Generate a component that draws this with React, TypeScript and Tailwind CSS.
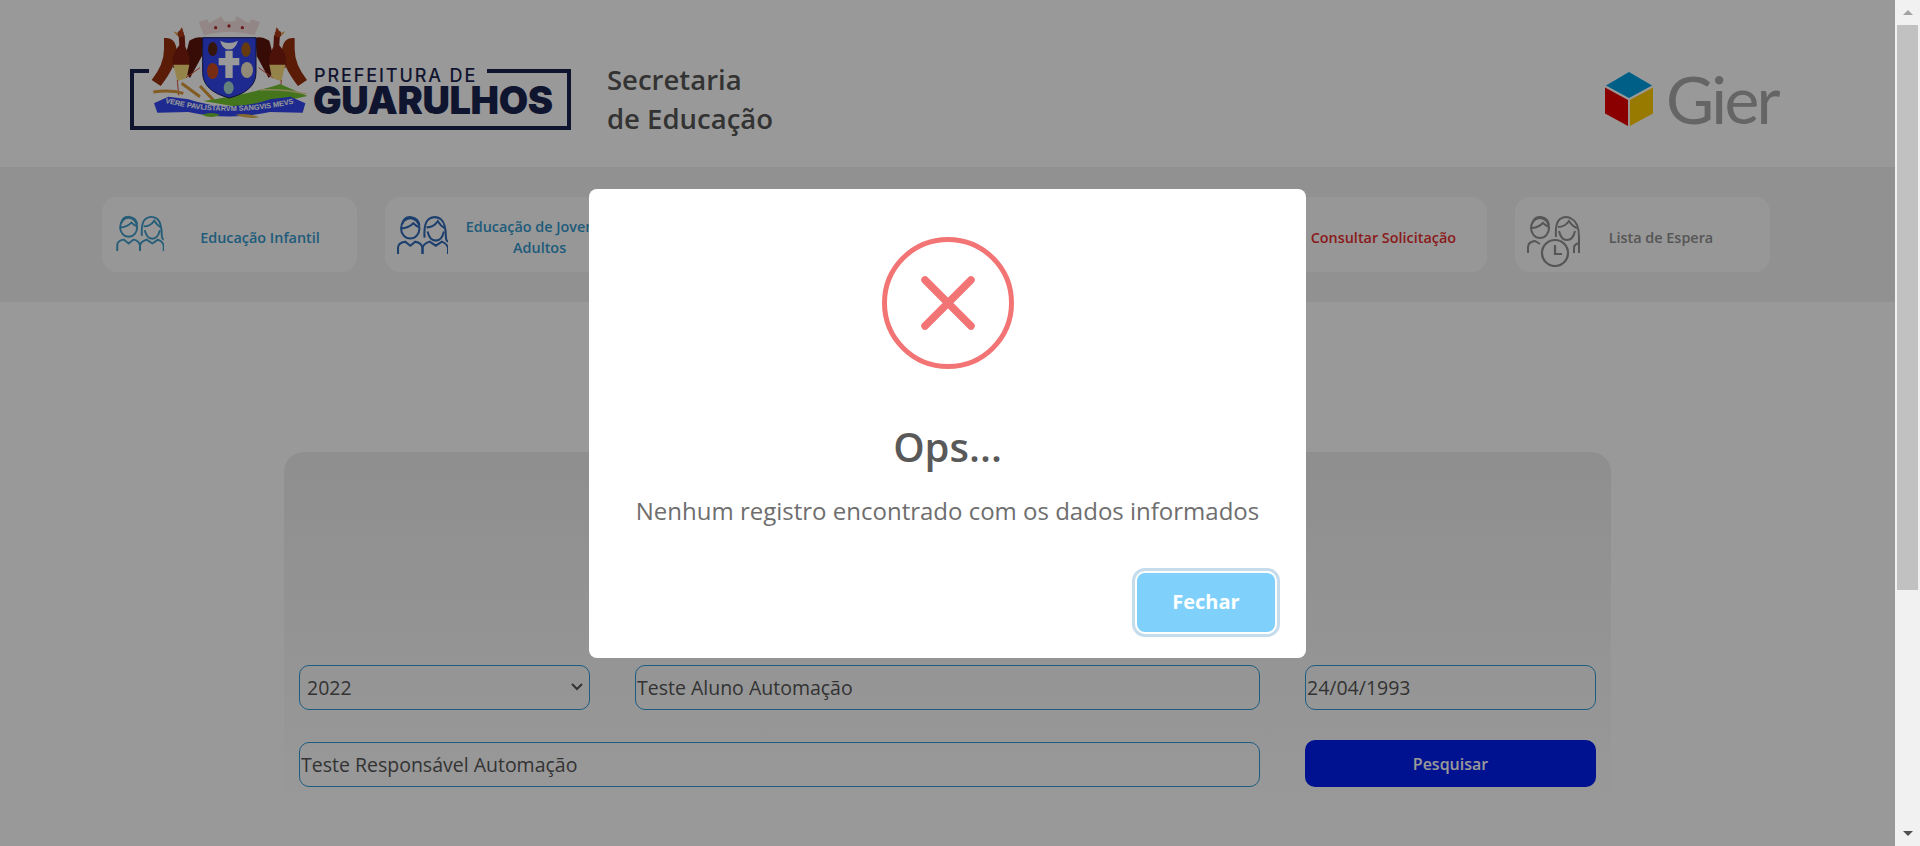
// App.tsx
import { ReactNode } from 'react';

function KidsIcon({ color, className }: { color: string; className: string }) {
  return (
    <svg viewBox="0 0 50 38" fill="none" stroke={color} strokeWidth="2" className={className}>
      {/* boy */}
      <ellipse cx="13" cy="13" rx="9" ry="10" />
      <path d="M4 13 Q11 13 16 8 Q19 11 22 12" />
      <path d="M5 9 Q7 1 14 2 Q21 3 22 10" />
      <path d="M1 38 V32 Q1 27 8 26 L13 30 L18 26 Q24 27 25 32 V38" />
      {/* girl */}
      <path d="M27 22 Q26 8 31 4 Q37 0 43 4 Q48 8 48 22 Q48 25 50 26" />
      <path d="M29 12 Q36 12 40 6 Q43 11 47 13" />
      <path d="M30 16 Q32 25 38 25 Q44 25 46 16" />
      <path d="M25 38 V32 Q26 28 32 26 L38 30 L44 26 Q49 28 50 32 V38" />
    </svg>
  );
}

function WaitingIcon() {
  return (
    <svg viewBox="0 0 54 52" fill="none" stroke="#8f8f8f" strokeWidth="2" className="w-[54px] h-[52px] shrink-0">
      <ellipse cx="13" cy="13" rx="9" ry="10" />
      <path d="M4 13 Q11 13 16 8 Q19 11 22 12" />
      <path d="M5 9 Q7 1 14 2 Q21 3 22 10" />
      <path d="M1 38 V32 Q1 27 8 26 L13 29" />
      <path d="M29 22 Q28 8 33 4 Q39 0 45 4 Q52 8 52 22 V38" />
      <path d="M31 12 Q38 12 42 6 Q45 11 50 13" />
      <path d="M32 16 Q34 25 40 25 Q46 25 48 16" />
      <path d="M47 38 V32 Q48 29 52 28" />
      <circle cx="28" cy="38" r="13" strokeWidth="2.2" />
      <path d="M28 30 V39 H35" strokeWidth="2.2" />
    </svg>
  );
}

function Crest() {
  const bird = (
    <g>
      {/* outer wing */}
      <path d="M132 96 Q166 92 170 132 Q172 176 122 240 L95 222 Q132 176 132 130 Z" fill="#96300d" />
      {/* inner wing */}
      <path d="M208 104 Q232 90 250 95 L246 150 L210 216 L186 190 Z" fill="#5e150a" />
      {/* body and head */}
      <path d="M176 84 L194 88 L196 122 Q214 156 206 186 L160 186 Q150 146 178 118 Z" fill="#7f1f0f" />
      <circle cx="182" cy="84" r="10" fill="#a93a18" />
      <path d="M172 80 L160 76 L172 90 Z" fill="#e0a040" />
      <path d="M178 74 L186 64 L190 76 Z" fill="#b8401c" />
      {/* legs */}
      <path d="M160 176 L208 176 L200 216 L172 226 Z" fill="#f7dc7a" />
      <path d="M172 222 L176 268 M198 215 L240 185" stroke="#d8503a" strokeWidth="3" fill="none" />
    </g>
  );
  return (
    <svg viewBox="0 0 660 390" className="absolute left-[-14px] top-[-63px] w-[220px] h-[130px]">
      {/* crown */}
      <path
        d="M236 48 L262 40 L268 52 L304 30 L312 46 L344 46 L350 30 L386 52 L394 40 L420 48 L404 88 Q328 66 252 88 Z"
        fill="#f3e2df"
      />
      <circle cx="287" cy="65" r="5" fill="#b03030" />
      <circle cx="327" cy="60" r="5" fill="#b03030" />
      <circle cx="367" cy="65" r="5" fill="#b03030" />
      {bird}
      <g transform="translate(656,0) scale(-1,1)">{bird}</g>
      {/* wheat and leaves */}
      <path d="M100 258 Q150 250 190 262 M185 232 L240 272 M240 240 L280 282" stroke="#d99a3a" strokeWidth="9" fill="none" />
      <path d="M250 285 Q400 262 480 234 L562 270 Q470 292 350 302 Z" fill="#72c22e" />
      <path d="M420 252 Q490 248 560 264" stroke="#e8dc9a" strokeWidth="4" fill="none" />
      {/* shield */}
      <path d="M248 95 H408 V200 Q408 255 328 276 Q248 255 248 200 Z" fill="#3247f0" stroke="#1a1f5a" strokeWidth="3" />
      <path d="M300 104 Q327 118 354 104 Q345 132 327 130 Q309 132 300 104 Z" fill="#ffffff" />
      <path d="M316 134 H338 V156 H358 V178 H338 V216 H316 V178 H296 V156 H316 Z" fill="#ffffff" />
      <ellipse cx="278" cy="129" rx="14" ry="21" fill="#5a2412" />
      <ellipse cx="378" cy="131" rx="14" ry="22" fill="#a8621c" />
      <ellipse cx="278" cy="195" rx="17" ry="24" fill="#c84a22" />
      <ellipse cx="381" cy="192" rx="18" ry="24" fill="#f3e6c8" />
      <ellipse cx="326" cy="245" rx="15" ry="19" fill="#a8d8d0" />
      {/* ribbon */}
      <path d="M102 292 L145 272 L205 280 Q330 322 450 280 L512 272 L556 292 L548 320 L450 318 Q330 345 205 318 L112 320 Z" fill="#3247f0" />
      <path id="ribbon-line" d="M135 290 Q330 340 530 290" fill="none" />
      <text fontFamily="'Liberation Sans', sans-serif" fontSize="22" fontWeight="700" fill="#ffffff" textLength="390">
        <textPath href="#ribbon-line" startOffset="0">VERE PAVLISTARVM SANGVIS MEVS</textPath>
      </text>
      <path d="M245 326 Q275 316 300 326 Q275 340 245 326 Z" fill="#72c22e" />
      <path d="M345 326 Q385 320 418 334 Q380 340 345 326 Z" fill="#e0b050" />
    </svg>
  );
}

function CityLogo() {
  return (
    <div className="relative w-[441px] h-[61px] border-x-4 border-b-4 border-[#19234f]">
      <div className="absolute left-[-4px] top-0 w-[19px] h-[4px] bg-[#19234f]" />
      <div className="absolute right-[-4px] top-0 w-[84px] h-[4px] bg-[#19234f]" />
      <Crest />
      <div className="absolute left-[180px] top-[-3px] font-['Inter',sans-serif] font-medium text-[18px] leading-[20px] tracking-[0.105em] text-[#19234f] whitespace-nowrap">
        PREFEITURA DE
      </div>
      <div className="absolute left-[179px] top-[18px] font-['Inter',sans-serif] font-black text-[38px] leading-[26px] tracking-[-0.01em] text-[#19234f] whitespace-nowrap">
        GUARULHOS
      </div>
    </div>
  );
}

function GierLogo() {
  return (
    <div className="flex items-center gap-[13px]">
      <svg viewBox="0 0 50 56" className="w-[48px] h-[56px]">
        <path d="M25 0 L49 14 L25 27 L1 14 Z" fill="#009fe0" />
        <path d="M0 16 L24 29 L24 56 L0 43 Z" fill="#e60000" />
        <path d="M26 29 L50 16 L50 43 L26 56 Z" fill="#ffcc00" />
      </svg>
      <span className="font-['Lato',sans-serif] font-normal text-[66px] leading-none tracking-[-0.04em] text-[#a8a8a8]">
        Gier
      </span>
    </div>
  );
}

function NavCard({
  label,
  icon,
  textClass,
  spanClass,
}: {
  label: string;
  icon?: ReactNode;
  textClass: string;
  spanClass: string;
}) {
  return (
    <div className="relative w-[255px] h-[75px] bg-[#fcfcfc] rounded-[15px] flex items-center">
      <div className="absolute left-[12px] top-[18px]">{icon}</div>
      <div className={`mt-[5px] text-[14.4px] leading-[21px] font-semibold text-center ${textClass} ${spanClass}`}>
        {label}
      </div>
    </div>
  );
}

export default function App() {
  return (
    <div className="flex w-[1920px] h-[846px] overflow-hidden font-['Open_Sans',sans-serif] bg-white">
      <div className="relative flex-1 min-w-0 overflow-hidden">
        <header className="h-[167px] flex items-center">
          <div className="ml-[130px] mt-[31px]">
            <CityLogo />
          </div>
          <div className="ml-[36px] mt-[30px] text-[27.5px] leading-[39px] font-semibold text-[#555555]">
            Secretaria
            <br />
            de Educação
          </div>
          <div className="ml-auto mr-[117px] mt-[31px]">
            <GierLogo />
          </div>
        </header>

        <nav className="h-[135px] bg-[#f2f2f2] flex items-center gap-[27.6px] pl-[102px]">
          <NavCard
            label="Educação Infantil"
            icon={<KidsIcon color="#3f9cc9" className="w-[48px] h-[36px] ml-[2px]" />}
            textClass="text-[#3498cc]"
            spanClass="ml-[95px] w-[126px]"
          />
          <NavCard
            label="Educação de Jovens e Adultos"
            icon={<KidsIcon color="#3169b8" className="w-[51px] h-[39px]" />}
            textClass="text-[#3498cc]"
            spanClass="ml-[75px] w-[160px]"
          />
          <NavCard label="Ensino Fundamental" textClass="text-[#3498cc]" spanClass="ml-[60px] w-[180px]" />
          <NavCard label="Transferência" textClass="text-[#3498cc]" spanClass="ml-[60px] w-[180px]" />
          <NavCard label="Consultar Solicitação" textClass="text-[#e62e2e]" spanClass="ml-[76px] w-[150px]" />
          <NavCard
            label="Lista de Espera"
            icon={<WaitingIcon />}
            textClass="text-[#8f8f8f]"
            spanClass="ml-[91px] w-[110px]"
          />
        </nav>

        <section className="ml-[284px] mt-[150px] w-[1327px] h-[358px] rounded-[20px] bg-linear-to-b from-[#eeeeee] to-white px-[15px] pt-[213px]">
          <div className="grid grid-cols-[291px_1fr_291px] gap-x-[45px] gap-y-[30px] items-end">
            <div className="relative">
              <select
                defaultValue="2022"
                className="w-full h-[45px] appearance-none rounded-[10px] border border-[#2f9ad4] bg-transparent text-[19.5px] text-[#555555] px-[7px]"
              >
                <option>2022</option>
                <option>2021</option>
              </select>
              <svg
                viewBox="0 0 12 8"
                fill="none"
                stroke="#555555"
                strokeWidth="2"
                className="absolute right-[7px] top-[18px] w-[12px] h-[8px]"
              >
                <path d="M1 1 L6 6 L11 1" />
              </svg>
            </div>
            <input
              readOnly
              value="Teste Aluno Automação"
              className="h-[45px] rounded-[10px] border border-[#2f9ad4] bg-transparent text-[19.5px] text-[#555555] px-[1px]"
            />
            <input
              readOnly
              value="24/04/1993"
              className="h-[45px] rounded-[10px] border border-[#2f9ad4] bg-transparent text-[19.5px] text-[#555555] px-[1px]"
            />
            <input
              readOnly
              value="Teste Responsável Automação"
              className="col-span-2 h-[45px] rounded-[10px] border border-[#2f9ad4] bg-transparent text-[19.5px] text-[#555555] px-[1px]"
            />
            <button className="h-[47px] rounded-[10px] bg-[#001ef0] text-white text-[16px] font-semibold">
              Pesquisar
            </button>
          </div>
        </section>

        {/* alert over the page */}
        <div className="absolute inset-0 bg-black/40 flex items-center justify-center">
          <div className="w-[717px] h-[469px] bg-white rounded-[8px] flex flex-col items-center pt-[48px]">
            <div className="w-[132px] h-[132px] rounded-full border-[5px] border-[#f27474] flex items-center justify-center">
              <svg viewBox="0 0 54 54" className="w-[54px] h-[54px]">
                <path d="M4 4 L50 50 M50 4 L4 50" stroke="#f27474" strokeWidth="7.5" strokeLinecap="round" />
              </svg>
            </div>
            <h2 className="mt-[48px] text-[40px] leading-[60px] font-semibold text-[#595959]">Ops...</h2>
            <p className="mt-[16px] text-[24px] leading-[36px] text-[#6e6e6e]">
              Nenhum registro encontrado com os dados informados
            </p>
            <div className="mt-auto mb-[26px] mr-[31px] self-end">
              <button className="w-[138px] h-[59px] rounded-[8px] bg-[#7fd1fb] text-white text-[20px] font-bold shadow-[0_0_0_2px_#ffffff,0_0_0_5px_#c5dcec]">
                Fechar
              </button>
            </div>
          </div>
        </div>
      </div>

      {/* scrollbar */}
      <div className="w-[25px] shrink-0 bg-[#f1f1f1] flex flex-col items-center">
        <div className="h-[25px] flex items-center justify-center">
          <div className="w-0 h-0 border-x-[5px] border-x-transparent border-b-[5px] border-b-[#a3a3a3]" />
        </div>
        <div className="w-[21px] h-[565px] bg-[#c1c1c1]" />
        <div className="mt-auto h-[25px] flex items-center justify-center">
          <div className="w-0 h-0 border-x-[5px] border-x-transparent border-t-[5px] border-t-[#505050]" />
        </div>
      </div>
    </div>
  );
}
